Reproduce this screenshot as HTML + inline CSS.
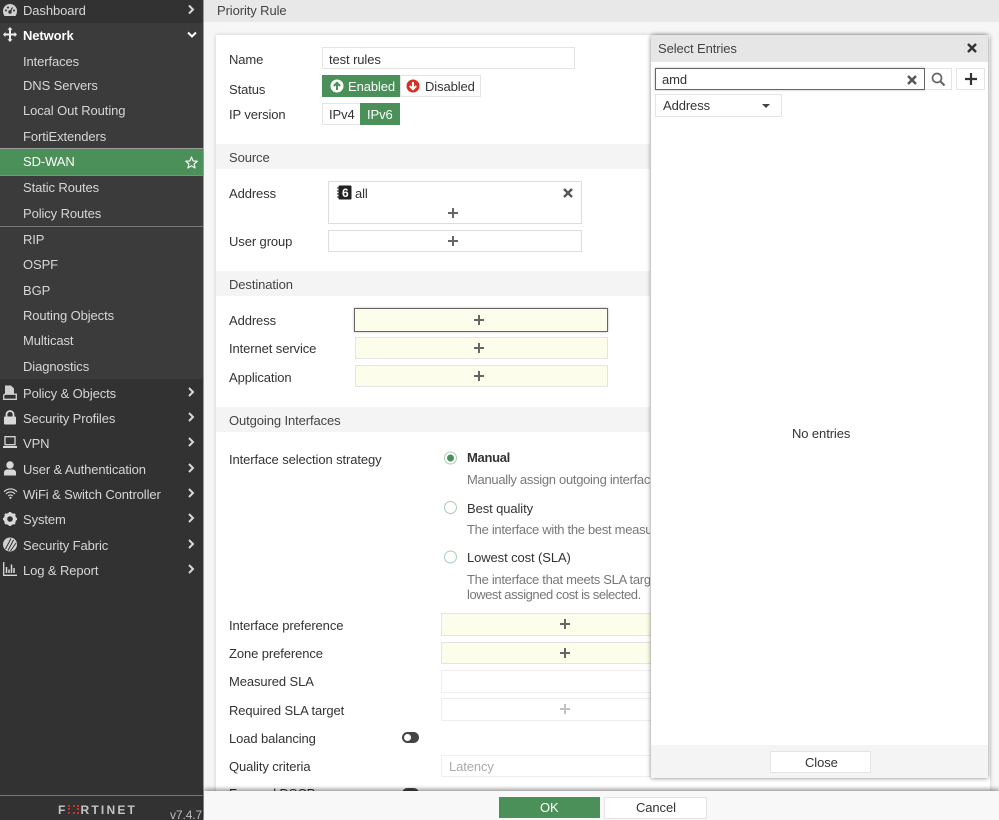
<!DOCTYPE html>
<html><head><meta charset="utf-8"><style>
html,body{margin:0;padding:0;width:999px;height:820px;overflow:hidden;background:#f6f6f6}
*{box-sizing:border-box}
body{font-family:"Liberation Sans",sans-serif;font-size:13px;color:#333}
#w{position:absolute;left:0;top:0;width:999px;height:820px;overflow:hidden;filter:blur(.3px)}
.a,.t,.n,.b,.d{position:absolute}
.t{white-space:nowrap;line-height:16px;height:16px;letter-spacing:-.1px;margin-top:1px}
.n{white-space:nowrap;line-height:16px;height:16px;left:23px;color:#d6d6d6;letter-spacing:-.1px;margin-top:1px}
.b{border:1px solid #e4e4e4;background:#fff}
.y{background:#fdfdeb}
.p{position:absolute;width:10px;height:10px}
.p:before{content:"";position:absolute;left:4px;top:0;width:2px;height:10px;background:#666}
.p:after{content:"";position:absolute;left:0;top:4px;width:10px;height:2px;background:#666}
.s{position:absolute;left:216px;width:434px;height:25px;background:#f4f4f4}
.d{color:#777;white-space:nowrap;line-height:16px;letter-spacing:-.3px;margin-top:1px}
svg{position:absolute;overflow:visible}
</style></head><body><div id="w">
<!-- sidebar -->
<div class="a" style="left:0;top:0;width:203px;height:820px;background:#323232"></div>
<div class="a" style="left:0;top:23px;width:203px;height:356px;background:#3b3b3b"></div>
<div class="a" style="left:203px;top:0;width:1px;height:820px;background:#9a9a9a"></div>
<div class="a" style="left:0;top:148px;width:203px;height:28px;background:#4a9058;border-top:1px solid #9a9a9a;border-bottom:1px solid #6f9a78"></div>
<div class="a" style="left:0;top:226px;width:203px;height:1px;background:#777"></div>
<div class="a" style="left:0;top:795px;width:203px;height:1px;background:#777"></div>

<svg style="left:3px;top:4px" width="14" height="12" viewBox="0 0 14 12"><path d="M7 0A7 7 0 0 0 0 7c0 2 .6 3.500 1.500 5h11c.9-1.500 1.500-3 1.500-5A7 7 0 0 0 7 0z" fill="#cfcfcf"/><circle cx="7" cy="8" r="1.700" fill="#323232"/><path d="M7 8l2.500-4.500" stroke="#323232" stroke-width="1.200"/><circle cx="3" cy="6.500" r="1" fill="#323232"/><circle cx="5" cy="3.500" r="1" fill="#323232"/><circle cx="11" cy="6.500" r="1" fill="#323232"/></svg>
<svg style="left:3px;top:27px" width="14" height="15" viewBox="0 0 14 15"><path d="M7 0l2.500 2.800H8V6.500h3.500V5L14 7.500 11.500 10V8.500H8v3.700h1.500L7 15l-2.500-2.800H6V8.500H2.500V10L0 7.500 2.500 5v1.500H6V2.800H4.500z" fill="#eee"/></svg>
<svg style="left:3px;top:385px" width="14" height="15" viewBox="0 0 14 15"><path d="M2 0.500h6l3 3v5H5.500C4 8.500 3 9 2.500 10H2z" fill="#cfcfcf"/><path d="M0.700 14.300V11q0-1.800 2-1.800H13.300v5.100z" fill="none" stroke="#cfcfcf" stroke-width="1.300"/></svg>
<svg style="left:3px;top:410px" width="14" height="15" viewBox="0 0 14 15"><path d="M3.500 6.500V4.500a3.500 3.500 0 0 1 7 0v2" fill="none" stroke="#d8d8d8" stroke-width="1.800"/><rect x="1" y="6.500" width="12" height="8" rx="1" fill="#d8d8d8"/></svg>
<svg style="left:3px;top:436px" width="14" height="13" viewBox="0 0 14 13"><rect x="2" y=".7" width="10" height="8" fill="none" stroke="#d8d8d8" stroke-width="1.300"/><rect x="0" y="10" width="14" height="2" fill="#d8d8d8"/></svg>
<svg style="left:3px;top:461px" width="14" height="15" viewBox="0 0 14 15"><circle cx="7" cy="4" r="3.700" fill="#d8d8d8"/><path d="M1 14.500v-3c0-2 2-3 3-3h6c1 0 3 1 3 3v3z" fill="#d8d8d8"/></svg>
<svg style="left:3px;top:488px" width="15" height="11" viewBox="0 0 15 11"><path d="M1 3.700a9 9 0 0 1 13 0M3 6a6 6 0 0 1 9 0M5.200 8a3 3 0 0 1 4.600 0" fill="none" stroke="#d8d8d8" stroke-width="1.100"/><circle cx="7.500" cy="9.800" r="1.100" fill="#d8d8d8"/></svg>
<svg style="left:3px;top:512px" width="14" height="14" viewBox="0 0 14 14"><circle cx="7" cy="7" r="4.500" fill="none" stroke="#d8d8d8" stroke-width="3.400"/><path d="M7 0v14M0 7h14M2 2l10 10M12 2L2 12" stroke="#d8d8d8" stroke-width="2.400" stroke-dasharray="2.400 9.200"/></svg>
<svg style="left:3px;top:537px" width="14" height="15" viewBox="0 0 14 15"><circle cx="7" cy="7.500" r="7" fill="#d0d0d0"/><path d="M5 13.500L10.500 3M7.500 14L13 6M2.500 12L8 1.500" stroke="#323232" stroke-width="1"/></svg>
<svg style="left:3px;top:562px" width="14" height="14" viewBox="0 0 14 14"><path d="M.7 0v13.300H14" fill="none" stroke="#d8d8d8" stroke-width="1.300"/><path d="M3.500 5v6M6 7.500V11M8.500 2.500V11M11 6v5" stroke="#d8d8d8" stroke-width="1.500"/></svg>

<div class="n" style="top:2px">Dashboard</div>
<div class="n" style="top:27px;color:#fff;font-weight:bold">Network</div>
<div class="n" style="top:53px">Interfaces</div>
<div class="n" style="top:77px">DNS Servers</div>
<div class="n" style="top:102px">Local Out Routing</div>
<div class="n" style="top:128px">FortiExtenders</div>
<div class="n" style="top:153px;color:#fff">SD-WAN</div>
<div class="n" style="top:179px">Static Routes</div>
<div class="n" style="top:205px">Policy Routes</div>
<div class="n" style="top:231px">RIP</div>
<div class="n" style="top:256px">OSPF</div>
<div class="n" style="top:282px">BGP</div>
<div class="n" style="top:307px">Routing Objects</div>
<div class="n" style="top:332px">Multicast</div>
<div class="n" style="top:358px">Diagnostics</div>
<div class="n" style="top:385px">Policy &amp; Objects</div>
<div class="n" style="top:410px">Security Profiles</div>
<div class="n" style="top:435px">VPN</div>
<div class="n" style="top:461px">User &amp; Authentication</div>
<div class="n" style="top:486px">WiFi &amp; Switch Controller</div>
<div class="n" style="top:511px">System</div>
<div class="n" style="top:537px">Security Fabric</div>
<div class="n" style="top:562px">Log &amp; Report</div>

<svg style="left:0;top:0" width="203" height="600" fill="none" stroke="#d8d8d8" stroke-width="2">
<path d="M189 5.500l4 4-4 4M189 388l4 4-4 4M189 413l4 4-4 4M189 438l4 4-4 4M189 464l4 4-4 4M189 489l4 4-4 4M189 514l4 4-4 4M189 540l4 4-4 4M189 565l4 4-4 4"/>
<path d="M188 32.500l4 4 4-4" stroke="#fff"/>
<path d="M191.500 157l1.600 3.900 4.200.3-3.200 2.700 1 4.100-3.600-2.200-3.600 2.200 1-4.100-3.200-2.700 4.200-.3z" stroke="#fff" stroke-width="1.100" stroke-linejoin="round"/>
</svg>

<!-- logo -->
<div class="t" style="left:58px;top:801px;width:82px;font-weight:bold;font-size:12px;color:#c4c4c4;letter-spacing:2.200px">F<span style="display:inline-block;width:11px;height:9px;margin:0 2px 0 0;border:2px dotted #c9332c"></span>RTINET</div>
<div class="t" style="left:170px;top:806px;font-size:12px;color:#bdbdbd">v7.4.7</div>

<!-- top bar -->
<div class="a" style="left:204px;top:0;width:795px;height:22px;background:#e8e8e8"></div>
<div class="t" style="left:217px;top:2px;color:#444">Priority Rule</div>

<!-- form panel -->
<div class="a" style="left:216px;top:35px;width:774px;height:785px;background:#fff;box-shadow:0 0 4px rgba(0,0,0,.18)"></div>

<div class="t" style="left:229px;top:51px">Name</div>
<div class="b" style="left:322px;top:47px;width:253px;height:22px"></div>
<div class="t" style="left:329px;top:51px">test rules</div>
<div class="t" style="left:229px;top:81px">Status</div>
<div class="a" style="left:322px;top:75px;width:78px;height:22px;background:#4a9058"></div>
<div class="b" style="left:400px;top:75px;width:81px;height:22px"></div>
<svg style="left:330px;top:79px" width="14" height="14" viewBox="0 0 14 14"><circle cx="7" cy="7" r="6.500" fill="#fff"/><path d="M7 11V4M3.800 7L7 3.800 10.200 7" fill="none" stroke="#4a9058" stroke-width="2"/></svg>
<div class="t" style="left:348px;top:78px;color:#fff">Enabled</div>
<svg style="left:406px;top:79px" width="14" height="14" viewBox="0 0 14 14"><circle cx="7" cy="7" r="6.500" fill="#d9301f"/><path d="M7 3v7M3.800 7L7 10.200 10.200 7" fill="none" stroke="#fff" stroke-width="2"/></svg>
<div class="t" style="left:425px;top:78px">Disabled</div>
<div class="t" style="left:229px;top:106px">IP version</div>
<div class="b" style="left:322px;top:103px;width:39px;height:22px"></div>
<div class="t" style="left:329px;top:106px">IPv4</div>
<div class="a" style="left:360px;top:103px;width:40px;height:22px;background:#4a9058"></div>
<div class="t" style="left:367px;top:106px;color:#fff">IPv6</div>

<div class="s" style="top:144px"></div>
<div class="t" style="left:229px;top:149px;color:#444">Source</div>
<div class="t" style="left:229px;top:185px">Address</div>
<div class="b" style="left:328px;top:181px;width:254px;height:43px;border-color:#ddd"></div>
<svg style="left:337px;top:185px" width="15" height="15" viewBox="0 0 15 15"><rect x="1.500" y="0.500" width="13" height="14" rx="1" fill="#222"/><path d="M0 3h2M0 6h2M0 9h2M0 12h2" stroke="#222"/><text x="5" y="12" font-family="Liberation Sans" font-weight="bold" font-size="12" fill="#fff">6</text></svg>
<div class="t" style="left:355px;top:185px">all</div>
<svg style="left:563px;top:188px" width="10" height="10" viewBox="0 0 10 10"><path d="M1 1l8 8M9 1L1 9" stroke="#555" stroke-width="2.400"/></svg>
<div class="p" style="left:448px;top:208px"></div>
<div class="t" style="left:229px;top:233px">User group</div>
<div class="b" style="left:328px;top:230px;width:254px;height:22px;border-color:#ddd"></div>
<div class="p" style="left:448px;top:236px"></div>

<div class="s" style="top:271px"></div>
<div class="t" style="left:229px;top:276px;color:#444">Destination</div>
<div class="t" style="left:229px;top:312px">Address</div>
<div class="b y" style="left:354px;top:308px;width:254px;height:24px;border-color:#666;box-shadow:0 0 2px rgba(0,0,0,.3)"></div>
<div class="p" style="left:474px;top:315px"></div>
<div class="t" style="left:229px;top:340px">Internet service</div>
<div class="b y" style="left:355px;top:337px;width:253px;height:22px"></div>
<div class="p" style="left:474px;top:343px"></div>
<div class="t" style="left:229px;top:369px">Application</div>
<div class="b y" style="left:355px;top:365px;width:253px;height:22px"></div>
<div class="p" style="left:474px;top:371px"></div>

<div class="s" style="top:407px"></div>
<div class="t" style="left:229px;top:412px;color:#444">Outgoing Interfaces</div>
<div class="t" style="left:229px;top:451px">Interface selection strategy</div>

<svg style="left:443px;top:450px" width="15" height="115" fill="#fff" stroke="#a9cdb1" stroke-width="1">
<circle cx="7.500" cy="8" r="6"/><circle cx="7.500" cy="8" r="3.500" fill="#4a9058" stroke="none"/>
<circle cx="7.500" cy="57.500" r="6"/><circle cx="7.500" cy="107" r="6"/></svg>
<div class="t" style="left:467px;top:449px;font-weight:bold;color:#333;letter-spacing:-.3px">Manual</div>
<div class="a" style="left:467px;top:471px;width:183px;height:18px;overflow:hidden"><div class="d">Manually assign outgoing interfac</div></div>
<div class="a" style="left:467px;top:521px;width:183px;height:18px;overflow:hidden"><div class="d">The interface with the best measu</div></div>
<div class="a" style="left:467px;top:571px;width:183px;height:18px;overflow:hidden"><div class="d">The interface that meets SLA targ</div></div>
<div class="t" style="left:467px;top:500px">Best quality</div>
<div class="t" style="left:467px;top:549px">Lowest cost (SLA)</div>
<div class="d" style="left:467px;top:586px;letter-spacing:-.45px">lowest assigned cost is selected.</div>

<div class="t" style="left:229px;top:617px">Interface preference</div>
<div class="b y" style="left:441px;top:613px;width:215px;height:23px"></div>
<div class="p" style="left:560px;top:619px"></div>
<div class="t" style="left:229px;top:645px">Zone preference</div>
<div class="b y" style="left:441px;top:642px;width:215px;height:22px"></div>
<div class="p" style="left:560px;top:648px"></div>
<div class="t" style="left:229px;top:673px">Measured SLA</div>
<div class="b" style="left:441px;top:670px;width:215px;height:23px;border-color:#eee"></div>
<div class="t" style="left:229px;top:702px">Required SLA target</div>
<div class="b" style="left:441px;top:698px;width:215px;height:23px;border-color:#eee"></div>
<div class="p" style="left:560px;top:704px;opacity:.4"></div>
<div class="t" style="left:229px;top:730px">Load balancing</div>
<div class="a" style="left:402px;top:732px;width:17px;height:11px;border-radius:6px;background:#444"></div>
<div class="a" style="left:404px;top:734px;width:7px;height:7px;border-radius:50%;background:#fff"></div>
<div class="t" style="left:229px;top:758px">Quality criteria</div>
<div class="b" style="left:441px;top:755px;width:215px;height:22px;border-color:#eee"></div>
<div class="t" style="left:449px;top:758px;color:#aaa">Latency</div>
<div class="t" style="left:229px;top:785px">Forward DSCP</div>
<div class="a" style="left:402px;top:788px;width:17px;height:11px;border-radius:6px;background:#444"></div>

<!-- modal -->
<div class="a" style="left:651px;top:35px;width:337px;height:743px;background:#fff;border-radius:3px 3px 0 0;box-shadow:0 0 5px rgba(0,0,0,.5)"></div>
<div class="a" style="left:651px;top:35px;width:337px;height:27px;background:#e6e6e6;border-radius:3px 3px 0 0"></div>
<div class="t" style="left:658px;top:40px;color:#444">Select Entries</div>
<svg style="left:967px;top:43px" width="10" height="10" viewBox="0 0 10 10"><path d="M1 1l8 8M9 1L1 9" stroke="#333" stroke-width="2.400"/></svg>
<div class="b" style="left:655px;top:68px;width:270px;height:22px;border-color:#666;box-shadow:0 0 2px rgba(0,0,0,.3)"></div>
<div class="t" style="left:662px;top:71px">amd</div>
<svg style="left:907px;top:75px" width="10" height="10" viewBox="0 0 10 10"><path d="M1 1l8 8M9 1L1 9" stroke="#555" stroke-width="2.400"/></svg>
<div class="b" style="left:925px;top:68px;width:27px;height:22px;border-left:0"></div>
<svg style="left:931px;top:72px" width="15" height="15" viewBox="0 0 15 15"><circle cx="6" cy="6" r="4.500" fill="none" stroke="#666" stroke-width="1.700"/><path d="M9.500 9.500l4 4" stroke="#666" stroke-width="2.200"/></svg>
<div class="b" style="left:956px;top:68px;width:29px;height:22px"></div>
<svg style="left:965px;top:73px" width="12" height="12" viewBox="0 0 12 12"><path d="M6 0v12M0 6h12" stroke="#333" stroke-width="2.200"/></svg>
<div class="b" style="left:655px;top:94px;width:127px;height:23px"></div>
<div class="t" style="left:663px;top:97px">Address</div>
<svg style="left:762px;top:104px" width="8" height="4" viewBox="0 0 8 4"><path d="M0 0h8L4 4z" fill="#444"/></svg>
<div class="t" style="left:792px;top:425px">No entries</div>
<div class="a" style="left:651px;top:745px;width:337px;height:33px;background:#f4f4f4"></div>
<div class="b" style="left:770px;top:751px;width:101px;height:22px"></div>
<div class="t" style="left:805px;top:754px">Close</div>

<!-- bottom bar -->
<div class="a" style="left:204px;top:791px;width:795px;height:29px;background:#f8f8f8;box-shadow:0 -2px 4px rgba(0,0,0,.4)"></div>
<div class="a" style="left:499px;top:797px;width:101px;height:21px;background:#4a9058"></div>
<div class="t" style="left:540px;top:799px;color:#fff">OK</div>
<div class="b" style="left:604px;top:797px;width:103px;height:22px"></div>
<div class="t" style="left:636px;top:799px">Cancel</div>
</div></body></html>
